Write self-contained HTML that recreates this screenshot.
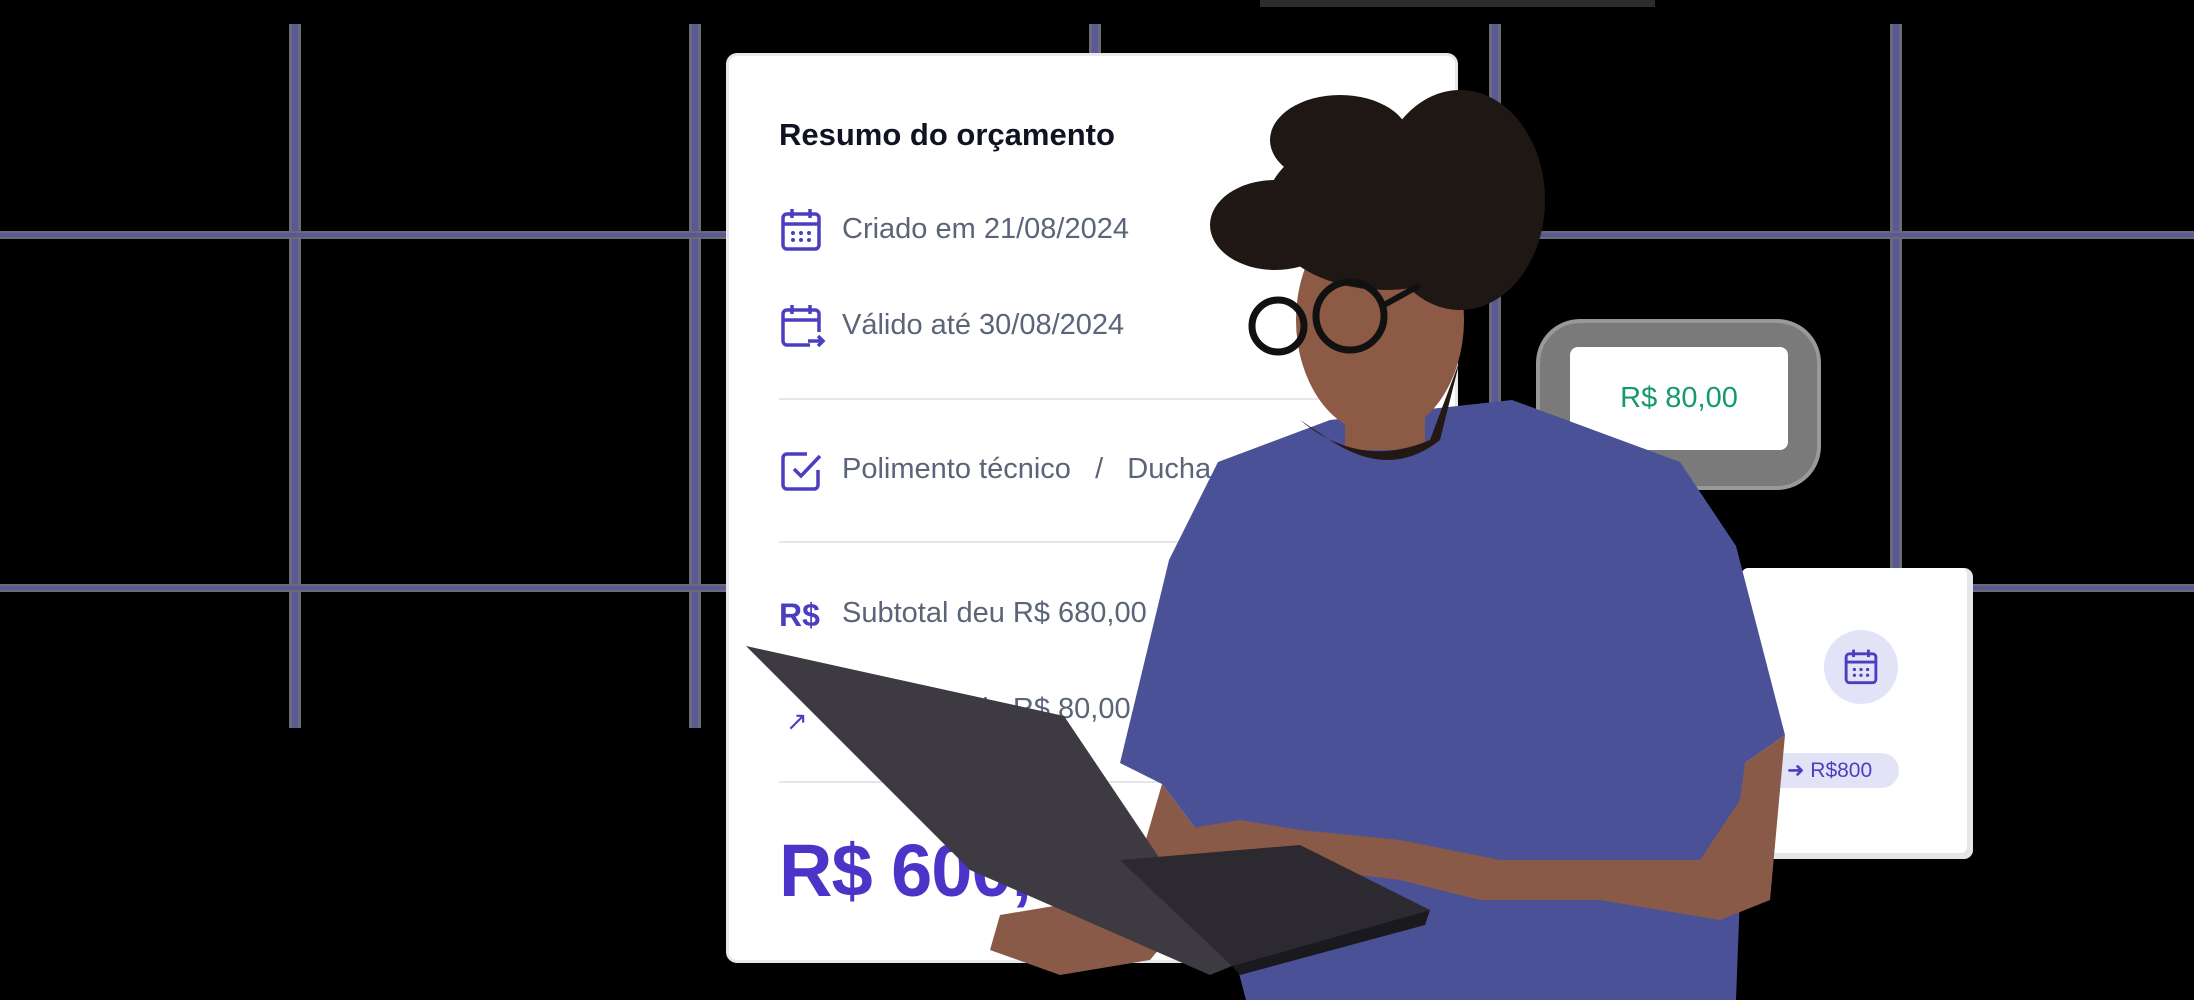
<!DOCTYPE html>
<html><head><meta charset="utf-8"><style>
html,body{margin:0;padding:0;background:#000;}
body{width:2194px;height:1000px;position:relative;overflow:hidden;font-family:"Liberation Sans",sans-serif;}
.v{position:absolute;top:24px;height:704px;width:12px;background:#5a5896;border-left:3px solid #6b6b73;border-right:3px solid #6b6b73;box-sizing:border-box;}
.h{position:absolute;left:0;width:2194px;height:8px;background:#5a5896;border-top:2px solid #6b6b73;border-bottom:2px solid #6b6b73;box-sizing:border-box;}
.card{position:absolute;left:729px;top:56px;width:726px;height:904px;background:#fff;border-radius:8px;box-shadow:0 0 0 3px #e8e8ec;}
.t{position:absolute;left:842px;font-size:29px;color:#5b6478;line-height:1;}
.ic{position:absolute;left:780px;}
.div{position:absolute;left:779px;width:640px;height:2px;background:#e4e6ea;}
</style></head><body>
<div style="position:absolute;left:1260px;top:0;width:395px;height:7px;background:#2a2c2e"></div>
<div class="v" style="left:289px"></div>
<div class="v" style="left:689px"></div>
<div class="v" style="left:1089px"></div>
<div class="v" style="left:1489px"></div>
<div class="v" style="left:1890px"></div>
<div class="h" style="top:231px"></div>
<div class="h" style="top:584px"></div>

<div class="card"></div>
<div style="position:absolute;left:779px;top:117px;font-size:31px;font-weight:bold;color:#111322">Resumo do orçamento</div>

<svg class="ic" style="top:207px" width="42" height="46" viewBox="0 0 42 46" fill="none" stroke="#4b3fc0" stroke-width="3.5"><rect x="3" y="7" width="36" height="35" rx="4"/><line x1="3" y1="17" x2="39" y2="17"/><line x1="12" y1="2" x2="12" y2="11"/><line x1="30" y1="2" x2="30" y2="11"/><g fill="#4b3fc0" stroke="none"><circle cx="13" cy="26" r="2"/><circle cx="21" cy="26" r="2"/><circle cx="29" cy="26" r="2"/><circle cx="13" cy="33" r="2"/><circle cx="21" cy="33" r="2"/><circle cx="29" cy="33" r="2"/></g></svg>
<div class="t" style="top:215px">Criado em 21/08/2024</div>

<svg class="ic" style="top:303px" width="46" height="46" viewBox="0 0 46 46" fill="none" stroke="#4b3fc0" stroke-width="3.5"><path d="M30 42H7a4 4 0 0 1-4-4V11a4 4 0 0 1 4-4h28a4 4 0 0 1 4 4v18"/><line x1="3" y1="17" x2="39" y2="17"/><line x1="12" y1="2" x2="12" y2="11"/><line x1="30" y1="2" x2="30" y2="11"/><path d="M28 38h15M38 33l5 5-5 5"/></svg>
<div class="t" style="top:311px">Válido até 30/08/2024</div>

<div class="div" style="top:398px"></div>

<svg class="ic" style="top:448px" width="44" height="44" viewBox="0 0 44 44" fill="none" stroke="#4b3fc0" stroke-width="3.5"><path d="M38 22v15a4 4 0 0 1-4 4H7a4 4 0 0 1-4-4V10a4 4 0 0 1 4-4h20"/><path d="M14 21l7 7 19-20"/></svg>
<div class="t" style="top:455px">Polimento técnico &nbsp;&nbsp;/&nbsp;&nbsp; Ducha rápida</div>

<div class="div" style="top:541px"></div>

<div style="position:absolute;left:779px;top:597px;font-size:32px;font-weight:bold;color:#4b3fc0">R$</div>
<div class="t" style="top:599px">Subtotal deu R$ 680,00</div>
<div style="position:absolute;left:786px;top:706px;font-size:26px;color:#4b3fc0">↗</div>
<div class="t" style="top:695px">Desconto de R$ 80,00</div>

<div class="div" style="top:781px"></div>
<div style="position:absolute;left:779px;top:828px;font-size:74px;font-weight:bold;color:#4a35c8;letter-spacing:-1px">R$ 600,00</div>

<!-- R$80 card -->
<div style="position:absolute;left:1540px;top:323px;width:277px;height:163px;border-radius:40px;background:#7a7a7a;box-shadow:0 0 0 4px #999"></div>
<div style="position:absolute;left:1570px;top:347px;width:218px;height:103px;background:#fff;border-radius:8px;color:#159a6c;font-size:29px;line-height:103px;text-align:center">R$ 80,00</div>

<!-- right card -->
<div style="position:absolute;left:1742px;top:568px;width:225px;height:285px;background:#fff;border-radius:6px;box-shadow:3px 3px 0 3px #e4e6ea"></div>
<div style="position:absolute;left:1824px;top:630px;width:74px;height:74px;border-radius:50%;background:#e2e3f7"></div>
<svg style="position:absolute;left:1842px;top:648px" width="38" height="38" viewBox="0 0 42 46" fill="none" stroke="#4b3fc0" stroke-width="3.5"><rect x="3" y="7" width="36" height="35" rx="4"/><line x1="3" y1="17" x2="39" y2="17"/><line x1="12" y1="2" x2="12" y2="11"/><line x1="30" y1="2" x2="30" y2="11"/><g fill="#4b3fc0" stroke="none"><circle cx="13" cy="26" r="2"/><circle cx="21" cy="26" r="2"/><circle cx="29" cy="26" r="2"/><circle cx="13" cy="33" r="2"/><circle cx="21" cy="33" r="2"/><circle cx="29" cy="33" r="2"/></g></svg>
<div style="position:absolute;left:1760px;top:753px;width:139px;height:35px;border-radius:18px;background:#e2e3f7;color:#4b3fc0;font-size:21px;line-height:35px;text-align:center">➜ R$800</div>

<!-- person -->
<svg style="position:absolute;left:0;top:0" width="2194" height="1000" viewBox="0 0 2194 1000">
<polygon fill="#4b5196" points="1330,420 1512,400 1680,462 1736,546 1785,735 1745,763 1736,1000 1246,1000 1204,840 1162,784 1120,763 1169,560 1218,462"/>
<polygon fill="#8a5a48" points="1745,763 1785,735 1770,900 1720,920 1600,900 1480,900 1400,880 1320,870 1220,870 1180,830 1240,820 1300,830 1400,840 1500,860 1600,860 1700,860 1740,800"/>
<polygon fill="#8a5a48" points="1162,784 1204,840 1200,900 1150,960 1060,975 990,950 1000,915 1090,900 1140,860"/>
<ellipse cx="1380" cy="320" rx="84" ry="115" fill="#8c5a45"/>
<rect x="1345" y="380" width="80" height="70" fill="#8c5a45"/>
<ellipse cx="1385" cy="210" rx="120" ry="80" fill="#1f1714"/>
<ellipse cx="1460" cy="200" rx="85" ry="110" fill="#1f1714"/>
<ellipse cx="1275" cy="225" rx="65" ry="45" fill="#1f1714"/>
<ellipse cx="1340" cy="140" rx="70" ry="45" fill="#1f1714"/>
<path d="M1300 420 Q1360 470 1430 440 L1460 360 L1440 440 Q1390 480 1330 440Z" fill="#241814"/>
<circle cx="1278" cy="326" r="26" fill="none" stroke="#111" stroke-width="7"/>
<circle cx="1350" cy="316" r="34" fill="none" stroke="#111" stroke-width="7"/>
<line x1="1384" y1="305" x2="1420" y2="285" stroke="#111" stroke-width="6"/>
<polygon fill="#3d3a42" points="746,646 1064,716 1232,966 1210,975 970,870"/>
<polygon fill="#2c2a30" points="1120,860 1300,845 1430,910 1232,966"/>
<polygon fill="#1a1a1e" points="1232,966 1430,910 1425,925 1240,975"/>
</svg>
</body></html>
